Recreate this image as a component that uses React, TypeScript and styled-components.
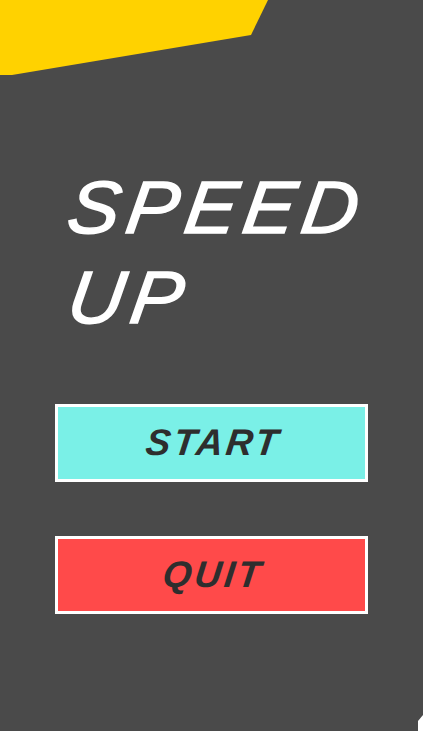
import React from "react";
import styled, { createGlobalStyle } from "styled-components";

const Global = createGlobalStyle`
  html, body { margin: 0; padding: 0; background: #4a4a4a; }
  #root { width: 423px; height: 731px; }
`;

const Screen = styled.div`
  position: relative;
  width: 423px;
  height: 731px;
  overflow: hidden;
  background: #4a4a4a;
  font-family: "Liberation Sans", Arial, sans-serif;
  display: flex;
  flex-direction: column;
  padding: 163px 55px 0 55px;
  box-sizing: border-box;
`;

const Banner = styled.svg`
  position: absolute;
  left: 0;
  top: 0;
`;

const Cursor = styled.svg`
  position: absolute;
  right: 0;
  bottom: 0;
`;

const Title = styled.h1`
  margin: 0 0 61px 10px;
  color: #ffffff;
  font-size: 74px;
  line-height: 90px;
  font-style: italic;
  font-weight: 400;
  letter-spacing: 0.085em;
  -webkit-text-stroke: 1.5px #ffffff;
`;

const TitleLine = styled.span`
  display: block;
  transform: scaleX(1.05) skewX(-8deg);
  transform-origin: 0 78%;
`;

const Menu = styled.div`
  display: flex;
  flex-direction: column;
  gap: 54px;
`;

const MenuButton = styled.button<{ $bg: string }>`
  width: 313px;
  height: 78px;
  box-sizing: border-box;
  border: 3px solid #ffffff;
  background: ${(p) => p.$bg};
  color: #2e2e2e;
  font-family: "Liberation Sans", Arial, sans-serif;
  font-size: 37px;
  font-style: italic;
  font-weight: 700;
  letter-spacing: 0.08em;
  padding: 0 0 0 4px;
  display: flex;
  align-items: center;
  justify-content: center;
`;

const Label = styled.span`
  display: inline-block;
  transform: skewX(-7deg);
`;

export default function App() {
  return (
    <>
      <Global />
      <Screen>
        <Banner width="270" height="76" viewBox="0 0 270 76">
          <polygon points="0,0 268,0 251,35 12,75 0,75" fill="#ffd200" />
        </Banner>
        <Title>
          <TitleLine>SPEED</TitleLine>
          <TitleLine>UP</TitleLine>
        </Title>
        <Menu>
          <MenuButton $bg="#7af0e7">
            <Label>START</Label>
          </MenuButton>
          <MenuButton $bg="#ff4a4a">
            <Label>QUIT</Label>
          </MenuButton>
        </Menu>
        <Cursor width="6" height="16" viewBox="0 0 6 16">
          <polygon points="1,16 1,6 6,0 6,16" fill="#ffffff" />
        </Cursor>
      </Screen>
    </>
  );
}
